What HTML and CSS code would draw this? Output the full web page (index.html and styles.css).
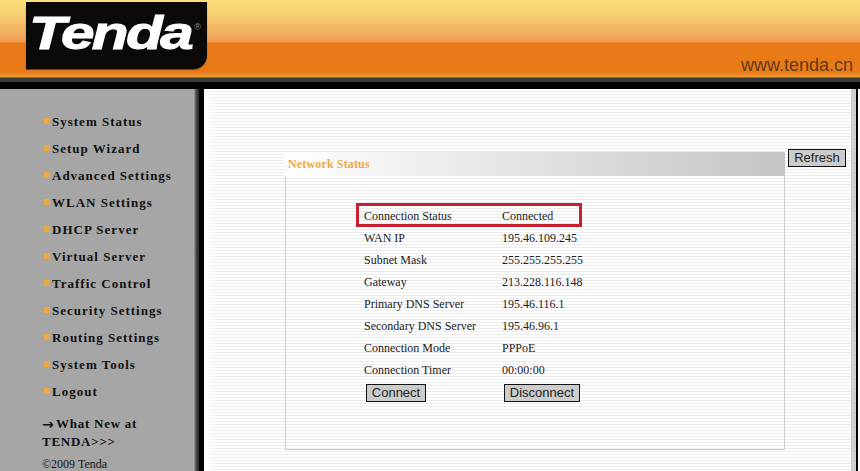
FILE: index.html
```html
<!DOCTYPE html>
<html lang="en">
<head>
  <title>Tenda</title>
  <meta charset="utf-8">
  <link rel="stylesheet" href="styles.css">
</head>
<body>
  <div class="header">
    <div class="logo"><span class="logo_text">Tenda</span><span class="logo_mark">®</span></div>
    <div class="site_url">www.tenda.cn</div>
  </div>
  <div class="content">
    <div class="sidebar">
      <ul class="menu">
        <li>System Status</li>
        <li>Setup Wizard</li>
        <li>Advanced Settings</li>
        <li>WLAN Settings</li>
        <li>DHCP Server</li>
        <li>Virtual Server</li>
        <li>Traffic Control</li>
        <li>Security Settings</li>
        <li>Routing Settings</li>
        <li>System Tools</li>
        <li>Logout</li>
      </ul>
      <div class="whats_new">
        <div class="whats_new_line"><span class="arrow">→</span><span>What New at</span></div>
        <div>TENDA&gt;&gt;&gt;</div>
      </div>
      <div class="copyright">©2009 Tenda</div>
    </div>
    <div class="main">
      <div class="panel">
        <div class="panel_title">Network Status</div>
        <div class="panel_body">
          <div class="row row_active"><span class="row_name">Connection Status</span><span>Connected</span></div>
          <div class="row"><span class="row_name">WAN IP</span><span>195.46.109.245</span></div>
          <div class="row"><span class="row_name">Subnet Mask</span><span>255.255.255.255</span></div>
          <div class="row"><span class="row_name">Gateway</span><span>213.228.116.148</span></div>
          <div class="row"><span class="row_name">Primary DNS Server</span><span>195.46.116.1</span></div>
          <div class="row"><span class="row_name">Secondary DNS Server</span><span>195.46.96.1</span></div>
          <div class="row"><span class="row_name">Connection Mode</span><span>PPPoE</span></div>
          <div class="row"><span class="row_name">Connection Timer</span><span>00:00:00</span></div>
          <div class="actions">
            <button class="btn btn_connect" type="button">Connect</button>
            <button class="btn btn_disconnect" type="button">Disconnect</button>
          </div>
        </div>
      </div>
      <button class="btn btn_refresh" type="button">Refresh</button>
    </div>
    <div class="edge"></div>
  </div>
</body>
</html>
```

FILE: styles.css
```css
*, ::before, ::after {
  box-sizing: border-box;
  margin: 0; padding: 0;
}

html, body {
  height: 100%;
  overflow: hidden;
}
body {
  display: flex;
  flex-direction: column;
  background: white;
  font-family: "Liberation Serif", serif;
}

/* header */
.header {
  display: flex;
  justify-content: space-between;
  flex: none;
  height: 89px;
  padding: 2px 7px 0 26px;
  background: linear-gradient(#fbe07c 0, #f6cf73 14px, #f0aa5e 36px, #f09a52 42px, #e97a18 43px, #e97a18 72px, #eb9a30 77px, #3c3a36 78px, #3c3a36 82px, black 82px);
}
.logo {
  position: relative;
  width: 181px; height: 67px;
  padding: 8px 0 0 3px;
  background: #0c0a08;
  border-radius: 0 0 14px 0;
  box-shadow: 0 1px 1px #6b3a10;
  overflow: hidden;
}
/* stretched sideways, the real logo is much wider than Liberation Sans */
.logo_text {
  display: block;
  color: white;
  font: italic bold 46px/46px "Liberation Sans", sans-serif;
  letter-spacing: -2px;
  transform: scaleX(1.31);
  transform-origin: left center;
  -webkit-text-stroke: 1px white;
}
.logo_mark {
  position: absolute;
  top: 21px; right: 6px;
  color: #8a8f96;
  font: 9px/9px "Liberation Sans", sans-serif;
}
.site_url {
  margin-top: 53px;
  color: #5f3a18;
  font: 18px/20px "Liberation Sans", sans-serif;
}

/* sidebar */
.content {
  display: flex;
  flex: 1;
  min-height: 0;
}
.sidebar {
  flex: none;
  width: 204px;
  padding: 19px 0 0 42px;
  background: linear-gradient(to right, #a6a6a6 194px, #4a4a4a 196px, #2a2a2a 199px, black 199px);
  color: #111;
  font-size: 13px;
  overflow: hidden;
}
.menu {
  list-style: none;
}
.menu li {
  position: relative;
  height: 27px;
  padding-left: 10px;
  font-weight: bold;
  line-height: 27px;
  letter-spacing: 1px;
}
.menu li::before {
  content: '';
  position: absolute;
  left: 2px; top: 10px;
  width: 6px; height: 6px;
  background: #f0a83c;
}
.whats_new {
  margin-top: 10px;
  font-weight: bold;
  line-height: 18px;
  letter-spacing: .75px;
}
.whats_new_line {
  display: flex;
  height: 18px;
}
.arrow {
  flex: none;
  width: 14px;
  font-family: "DejaVu Sans", sans-serif;
  font-size: 14px;
  letter-spacing: 0;
}
.copyright {
  margin-top: 4px;
  font-size: 12px;
  line-height: 18px;
}

/* main area */
.main {
  display: flex;
  align-items: flex-start;
  gap: 3px;
  flex: 1;
  padding: 63px 0 0 81px;
  border-right: 5px solid #cfcfcf;
  background:
    linear-gradient(to right, white, rgba(255, 255, 255, 0) 12px),
    repeating-linear-gradient(white 0, white 2px, #ececec 2px, #ececec 3px);
}
.edge {
  flex: none;
  width: 2px;
  margin-right: 2px;
  background: black;
}
.panel {
  flex: none;
  width: 500px;
}
.panel_title {
  height: 24px;
  padding-left: 3px;
  background: linear-gradient(to right, white 0, #c4c4c4 100%);
  color: #f0a848;
  font-size: 12px;
  font-weight: bold;
  line-height: 24px;
  letter-spacing: .15px;
}
.panel_body {
  height: 274px;
  padding: 29px 0 0 78px;
  border: 1px solid #cccccc;
  border-top: 0;
}
.row {
  position: relative;
  display: flex;
  height: 22px;
  color: #222;
  font-size: 12px;
  line-height: 22px;
}
.row_name {
  width: 138px;
}
.row_active::after {
  content: '';
  position: absolute;
  left: -8px; top: -2px;
  width: 226px; height: 24px;
  border: 3px solid #c8202f;
}
.actions {
  display: flex;
  padding: 3px 0 0 2px;
}
.btn {
  height: 18px;
  border: 1px solid #111;
  background: #cccccc;
  color: #222;
  font: 13px/16px "Liberation Sans", sans-serif;
}
.btn_connect {
  width: 60px;
  margin-right: 78px;
}
.btn_disconnect {
  width: 76px;
}
.btn_refresh {
  flex: none;
  width: 58px;
  margin-top: -3px;
}
```
